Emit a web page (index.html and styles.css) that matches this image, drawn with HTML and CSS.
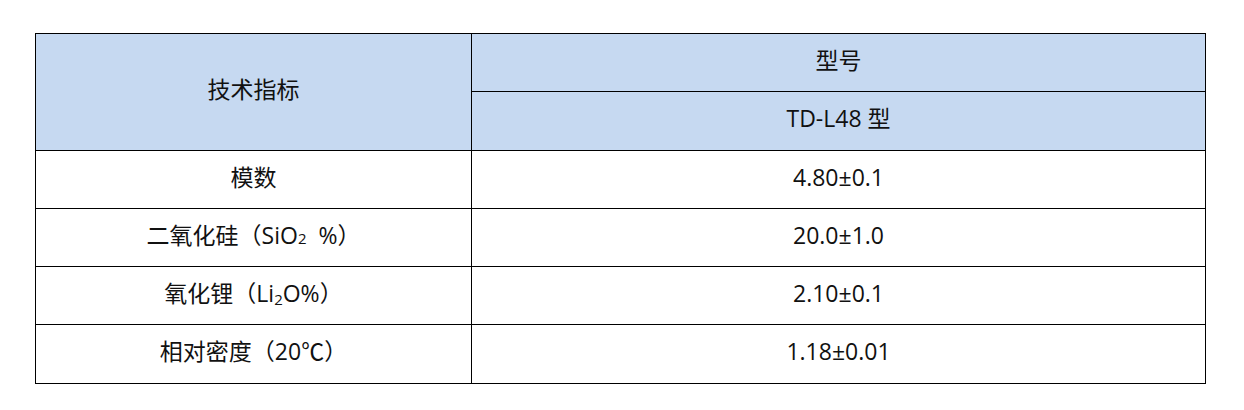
FILE: index.html
```html
<!DOCTYPE html>
<html lang="zh-CN">
<head>
<meta charset="utf-8">
<title>技术指标</title>
<link rel="stylesheet" href="styles.css">
</head>
<body>
<div class="page">
  <table class="spec">
    <colgroup>
      <col class="col-name">
      <col class="col-value">
    </colgroup>
    <thead>
      <tr class="row-h1">
        <th rowspan="2">技术指标</th>
        <th>型号</th>
      </tr>
      <tr class="row-h2">
        <th>TD-L48 型</th>
      </tr>
    </thead>
    <tbody>
      <tr class="row-a"><td>模数</td><td>4.80±0.1</td></tr>
      <tr class="row-a"><td>二氧化硅（SiO<sub class="sub-sp">2</sub>&nbsp;&nbsp;%）</td><td>20.0±1.0</td></tr>
      <tr class="row-a"><td>氧化锂（Li<sub class="sub">2</sub>O%）</td><td>2.10±0.1</td></tr>
      <tr class="row-b"><td>相对密度（20℃）</td><td>1.18±0.01</td></tr>
    </tbody>
  </table>
</div>
</body>
</html>
```
FILE: styles.css
```css
html, body {
  margin: 0;
  padding: 0;
  background: #ffffff;
}
.page {
  padding: 33px 0 0 35px;
}
.spec {
  border-collapse: collapse;
  width: 1170px;
  table-layout: fixed;
  font-family: "Open Sans", "Noto Sans CJK SC", sans-serif;
  font-size: 23px;
  line-height: 1.2;
  color: #111111;
}
.col-name { width: 436px; }
.col-value { width: 734px; }
.spec th, .spec td {
  border: 1px solid #000000;
  padding: 0 0 4px 0;
  text-align: center;
  vertical-align: middle;
  font-weight: normal;
}
.spec thead th {
  background: #c6d9f1;
}
.row-h1 { height: 58px; }
.row-h2 { height: 59px; }
.row-a { height: 58px; }
.row-b { height: 59px; }
.sub, .sub-sp {
  font-size: 15px;
  vertical-align: -3px;
  line-height: 0;
}
.sub-sp {
  vertical-align: 0;
}
```
